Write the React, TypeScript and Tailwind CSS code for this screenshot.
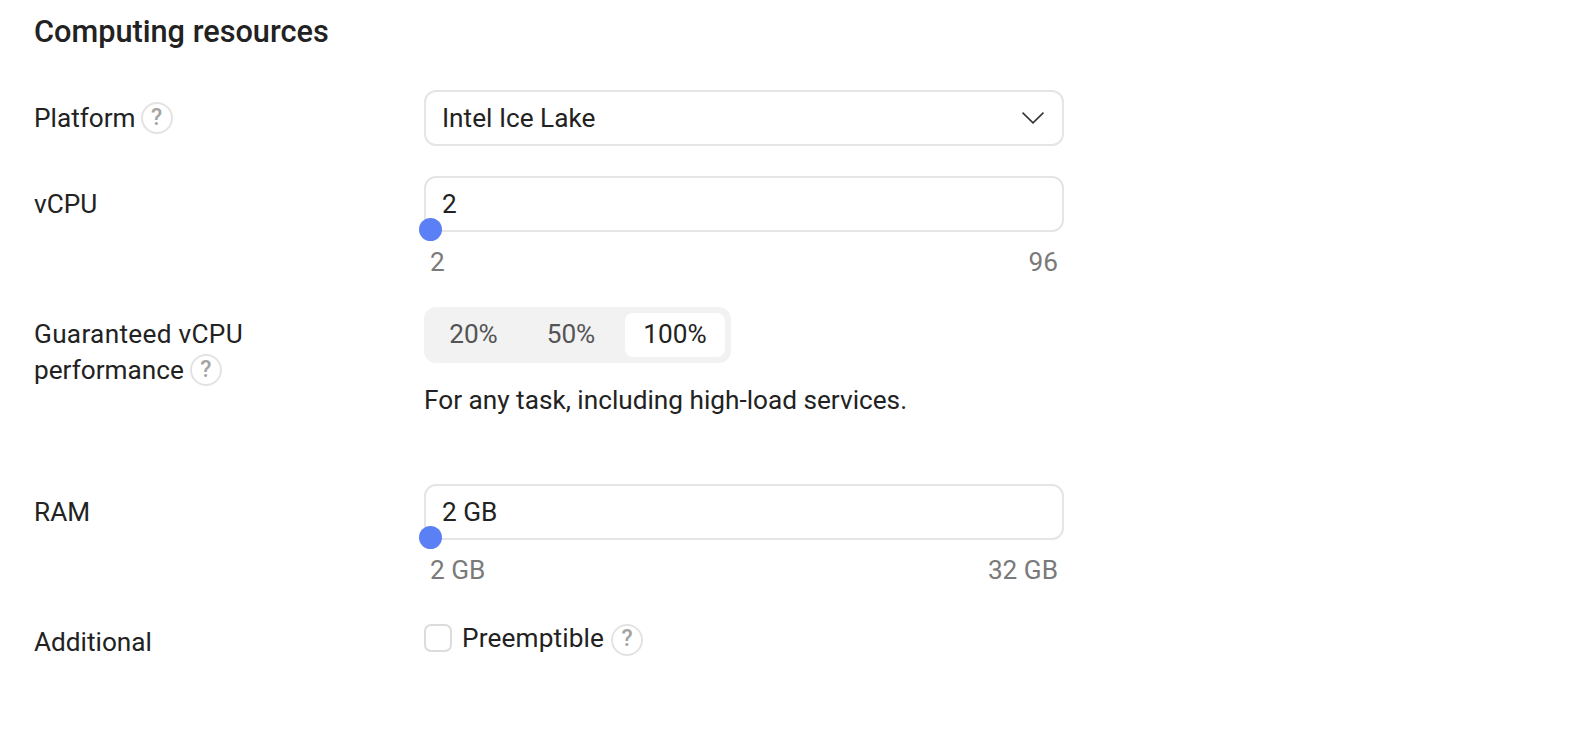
function Hint() {
  return (
    <span className="inline-flex h-[32px] w-[32px] shrink-0 items-center justify-center rounded-full border-2 border-[#e3e3e3] text-[23px] font-medium text-[#a3a3a3]">
      ?
    </span>
  );
}

function SliderField({ value, min, max }: { value: string; min: string; max: string }) {
  return (
    <div className="w-[640px]">
      <div className="relative">
        <div className="flex h-[56px] items-center rounded-[12px] border-2 border-[#e5e5e5] px-[16px] pt-[2px]">
          {value}
        </div>
        <div className="absolute left-[-5px] top-[42px] h-[23px] w-[23px] rounded-full bg-[#5b7ff5]" />
      </div>
      <div className="mt-[12px] flex justify-between pl-[6px] pr-[6px] leading-[36px] text-[#7a7a7a]">
        <span>{min}</span>
        <span>{max}</span>
      </div>
    </div>
  );
}

export default function App() {
  return (
    <div className="h-[732px] w-[1570px] overflow-hidden bg-white pl-[34px] pt-[12px] font-['Roboto',sans-serif] text-[26.2px] text-[#222222]">
      <h2 className="text-[30.7px] font-medium leading-[40px]">Computing resources</h2>

      <div className="mt-[38px] flex">
        <div className="flex h-[56px] w-[390px] items-center gap-[5px]">
          <span className="pt-[2px]">Platform</span> <Hint />
        </div>
        <div className="flex h-[56px] w-[640px] items-center justify-between rounded-[12px] border-2 border-[#e5e5e5] pl-[16px] pr-[18px]">
          <span className="pt-[2px]">Intel Ice Lake</span>
          <svg className="h-[12px] w-[22px]" viewBox="0 0 22 12" fill="none" stroke="#333333" strokeWidth="1.6">
            <path d="M0.5 0.7 L11 10.8 L21.5 0.7" />
          </svg>
        </div>
      </div>

      <div className="mt-[30px] flex">
        <div className="flex h-[56px] w-[390px] items-center pt-[2px]">vCPU</div>
        <SliderField value="2" min="2" max="96" />
      </div>

      <div className="mt-[27px] flex">
        <div className="w-[390px] pt-[9px] leading-[36px]">
          <div className="tracking-[0.3px]">Guaranteed vCPU</div>
          <div className="flex items-center gap-[6px]">
            performance <Hint />
          </div>
        </div>
        <div>
          <div className="inline-flex h-[56px] items-center rounded-[12px] bg-[#f2f2f2] p-[6px] text-[#555555]">
            <span className="w-[87px] text-center">20%</span>
            <span className="w-[108px] text-center">50%</span>
            <span className="flex h-[44px] w-[100px] items-center justify-center rounded-[8px] bg-white text-[#222222]">
              100%
            </span>
          </div>
          <p className="mt-[19px] leading-[36px]">For any task, including high-load services.</p>
        </div>
      </div>

      <div className="mt-[66px] flex">
        <div className="flex h-[56px] w-[390px] items-center pt-[2px]">RAM</div>
        <SliderField value="2 GB" min="2 GB" max="32 GB" />
      </div>

      <div className="mt-[33px] flex">
        <div className="flex h-[34px] w-[390px] items-center pt-[10px]">Additional</div>
        <div className="flex h-[34px] items-center">
          <span className="h-[28px] w-[28px] rounded-[7px] border-2 border-[#dcdcdc]" />
          <span className="ml-[10px] pt-[2px] tracking-[0.15px]">Preemptible</span>
          <span className="ml-[7px]">
            <Hint />
          </span>
        </div>
      </div>
    </div>
  );
}
